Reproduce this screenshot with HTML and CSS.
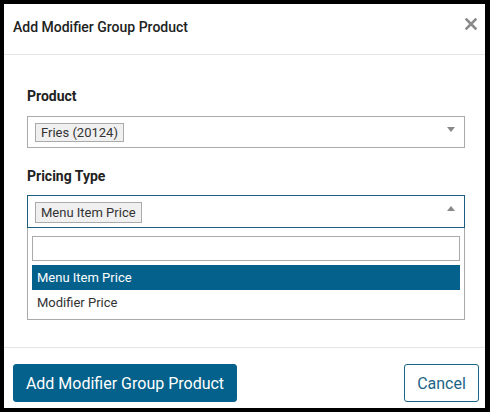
FILE: index.html
```html
<!DOCTYPE html>
<html>
<head>
<meta charset="utf-8">
<link rel="stylesheet" href="styles.css">
</head>
<body>
<div class="modal">
  <div class="modal-header">
    <div class="modal-title">Add Modifier Group Product</div>
    <svg class="close" width="12" height="12" viewBox="0 0 12 12"><path d="M1.5 1.5 L10.5 10.5 M10.5 1.5 L1.5 10.5" stroke="#8a8a8a" stroke-width="2.6" stroke-linecap="square"/></svg>
  </div>
  <div class="modal-body">
    <div class="label">Product</div>
    <div class="select">
      <span class="tag">Fries (20124)</span>
      <span class="arrow down"></span>
    </div>
    <div class="label label2">Pricing Type</div>
    <div class="select open">
      <span class="tag">Menu Item Price</span>
      <span class="arrow up"></span>
    </div>
    <div class="dropdown">
      <div class="search"></div>
      <div class="option active">Menu Item Price</div>
      <div class="option">Modifier Price</div>
    </div>
  </div>
  <div class="modal-footer">
    <button class="btn primary">Add Modifier Group Product</button>
    <button class="btn secondary">Cancel</button>
  </div>
</div>
</body>
</html>
```
FILE: styles.css
```css
html, body { margin: 0; padding: 0; }
body {
  background: #000;
  width: 490px;
  height: 412px;
  font-family: Roboto, "Liberation Sans", sans-serif;
  color: #333;
  overflow: hidden;
}
.modal {
  margin: 4px 0 0 4px;
  width: 481px;
  height: 404px;
  background: #fff;
  display: flex;
  flex-direction: column;
}
.modal-header {
  box-sizing: border-box;
  height: 51px;
  padding: 13px 8px 0 9px;
  border-bottom: 1px solid #e5e5e5;
  display: flex;
  justify-content: space-between;
  align-items: flex-start;
}
.modal-title {
  font-size: 14px;
  font-weight: 500;
  line-height: 20px;
  color: #222;
}
.close { margin-top: 1px; }
.modal-body {
  box-sizing: border-box;
  height: 292px;
  padding: 31px 20px 0 23px;
}
.label {
  font-size: 14px;
  font-weight: 700;
  line-height: 20px;
  color: #222;
  margin-bottom: 10px;
}
.label2 { margin-top: 18px; margin-bottom: 9px; }
.select {
  box-sizing: border-box;
  height: 32px;
  border: 1px solid #aaa;
  padding: 6px 7px;
  display: flex;
  align-items: flex-start;
  justify-content: space-between;
}
.select.open { border-color: #1b5e80; height: 33px; }
.tag {
  font-size: 13px;
  line-height: 17px;
  border: 1px solid #aaa;
  background: #f0f0f0;
  padding: 0 5px;
  color: #333;
}
.select.open .tag { line-height: 19px; }
.arrow {
  width: 0; height: 0;
  margin-right: 2px;
  border-left: 4px solid transparent;
  border-right: 4px solid transparent;
}
.arrow.down { border-top: 5px solid #888; margin-top: 4px; }
.arrow.up { border-bottom: 5px solid #888; margin-top: 4px; }
.dropdown {
  border: 1px solid #aaa;
  border-top: none;
  padding: 8px 4px 4px 4px;
}
.search {
  box-sizing: border-box;
  height: 25px;
  border: 1px solid #aaa;
  margin-bottom: 4px;
}
.option {
  font-size: 13px;
  line-height: 25px;
  height: 25px;
  padding-left: 5px;
  color: #333;
}
.option.active { background: #03618b; color: #fff; }
.modal-footer {
  border-top: 1px solid #e5e5e5;
  padding: 16px 6px 0 9px;
  display: flex;
  justify-content: space-between;
}
.btn {
  box-sizing: border-box;
  height: 38px;
  font-family: Roboto, "Liberation Sans", sans-serif;
  font-size: 16px;
  border-radius: 3px;
  padding: 0 13px;
  white-space: nowrap;
  cursor: pointer;
}
.primary {
  width: 224px;
  padding: 0;
  background: #03618b;
  border: 1px solid #03618b;
  color: #fff;
}
.secondary {
  width: 75px;
  padding: 0;
  background: #fff;
  border: 1px solid #1b6486;
  color: #1b6486;
}
```
